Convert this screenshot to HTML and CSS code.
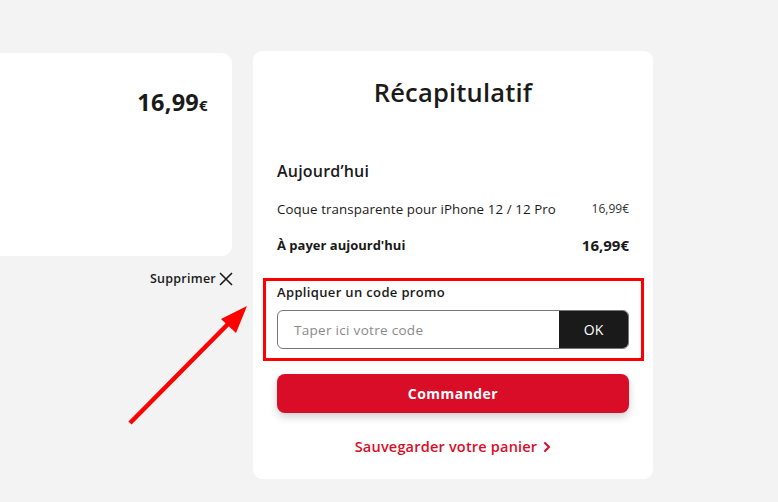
FILE: index.html
```html
<!DOCTYPE html>
<html lang="fr">
<head>
<meta charset="utf-8">
<title>Récapitulatif</title>
<link rel="stylesheet" href="styles.css">
</head>
<body>
<div class="page">
  <div class="left-col">
    <div class="item-card">
      <div class="item-price">16,99<span class="cur">€</span></div>
    </div>
    <div class="remove">
      <span>Supprimer</span>
      <svg class="x-icon" width="14" height="14" viewBox="0 0 14 14" aria-hidden="true">
        <path d="M1 1 L13 13 M13 1 L1 13" stroke="#1a1a1a" stroke-width="1.6" fill="none"/>
      </svg>
    </div>
  </div>
  <div class="summary">
    <h1 class="title">Récapitulatif</h1>
    <h2 class="section">Aujourd’hui</h2>
    <div class="row">
      <span class="item-name">Coque transparente pour iPhone 12 / 12 Pro</span>
      <span class="small-price">16,99€</span>
    </div>
    <div class="row total">
      <span>À payer aujourd'hui</span>
      <span class="total-price">16,99€</span>
    </div>
    <div class="promo">
      <div class="promo-label">Appliquer un code promo</div>
      <div class="promo-field">
        <span class="placeholder">Taper ici votre code</span>
        <span class="ok">OK</span>
      </div>
    </div>
    <div class="order">Commander</div>
    <div class="save">Sauvegarder votre panier
      <svg class="chev" width="8" height="12" viewBox="0 0 8 12" aria-hidden="true">
        <path d="M2 2 L6 6 L2 10" stroke="#d90d27" stroke-width="2" fill="none" stroke-linecap="round" stroke-linejoin="round"/>
      </svg>
    </div>
  </div>
</div>
<svg class="arrow" width="778" height="502" viewBox="0 0 778 502" aria-hidden="true">
  <line x1="130" y1="423" x2="232" y2="320" stroke="#ff0000" stroke-width="4.5" stroke-linecap="butt"/>
  <polygon points="247,306 221,319 236,333" fill="#ff0000"/>
</svg>
</body>
</html>
```
FILE: styles.css
```css
* { box-sizing: border-box; }
html, body {
  margin: 0;
  padding: 0;
  background: #f3f3f3;
  width: 778px;
  height: 502px;
  overflow: hidden;
  font-family: "Open Sans", "Noto Sans", sans-serif;
  color: #1a1a1a;
}
.page {
  display: flex;
  align-items: flex-start;
  gap: 20px;
}
.left-col {
  width: 233px;
  padding-top: 53px;
  display: flex;
  flex-direction: column;
  align-items: flex-end;
}
.item-card {
  width: 232px;
  height: 203px;
  margin-right: 1px;
  background: #fff;
  border-radius: 0 10px 10px 0;
  padding: 34px 24px 0 0;
  display: flex;
  justify-content: flex-end;
}
.item-price {
  font-size: 23.5px;
  font-weight: 700;
  line-height: 30px;
  letter-spacing: 0.3px;
}
.item-price .cur {
  font-size: 15px;
}
.remove {
  margin-top: 13px;
  display: flex;
  align-items: center;
  gap: 3px;
  font-size: 12.5px;
  font-weight: 600;
  line-height: 20px;
  letter-spacing: 0.25px;
}
.x-icon { display: block; }
.summary {
  margin-top: 51px;
  width: 400px;
  height: 428px;
  background: #fff;
  border-radius: 9px;
  padding: 25px 24px 0 24px;
  display: flex;
  flex-direction: column;
}
.title {
  margin: 0;
  text-align: center;
  font-size: 25.5px;
  font-weight: 600;
  line-height: 32px;
  letter-spacing: 0.2px;
}
.section {
  margin: 51px 0 0 0;
  font-size: 16px;
  font-weight: 600;
  line-height: 24px;
  letter-spacing: 0.2px;
}
.row {
  margin-top: 16px;
  display: flex;
  justify-content: space-between;
  align-items: center;
  font-size: 13px;
  line-height: 20px;
}
.item-name {
  font-size: 13.3px;
  letter-spacing: 0.1px;
}
.small-price {
  font-size: 12px;
  color: #333;
}
.total {
  font-weight: 700;
}
.total-price {
  font-size: 15px;
}
.promo {
  margin: 23px -15px 0 -14px;
  border: 3px solid #ff0000;
  padding: 1px 12px 9px 11px;
}
.promo-label {
  font-size: 13px;
  font-weight: 600;
  line-height: 20px;
  letter-spacing: 0.35px;
}
.promo-field {
  margin-top: 8px;
  height: 39px;
  border: 1px solid #777;
  border-radius: 6px;
  display: flex;
  align-items: stretch;
  overflow: hidden;
}
.placeholder {
  flex: 1;
  display: flex;
  align-items: center;
  padding-left: 16px;
  font-size: 13.5px;
  letter-spacing: 0.3px;
  color: #8a8a8a;
}
.ok {
  width: 69px;
  background: #1a1a1a;
  color: #fff;
  display: flex;
  align-items: center;
  justify-content: center;
  font-size: 14px;
  font-weight: 500;
}
.order {
  margin-top: 13px;
  height: 39px;
  border-radius: 8px;
  background: #d90d27;
  color: #fff;
  font-size: 14px;
  font-weight: 700;
  letter-spacing: 0.45px;
  display: flex;
  align-items: center;
  justify-content: center;
  box-shadow: 0 4px 8px rgba(0,0,0,0.18);
}
.save {
  margin-top: 24px;
  display: flex;
  align-items: center;
  justify-content: center;
  gap: 6px;
  font-size: 14.5px;
  font-weight: 600;
  line-height: 20px;
  letter-spacing: 0.2px;
  color: #d90d27;
}
.chev { display: block; }
.arrow {
  position: absolute;
  left: 0;
  top: 0;
  pointer-events: none;
}
```
